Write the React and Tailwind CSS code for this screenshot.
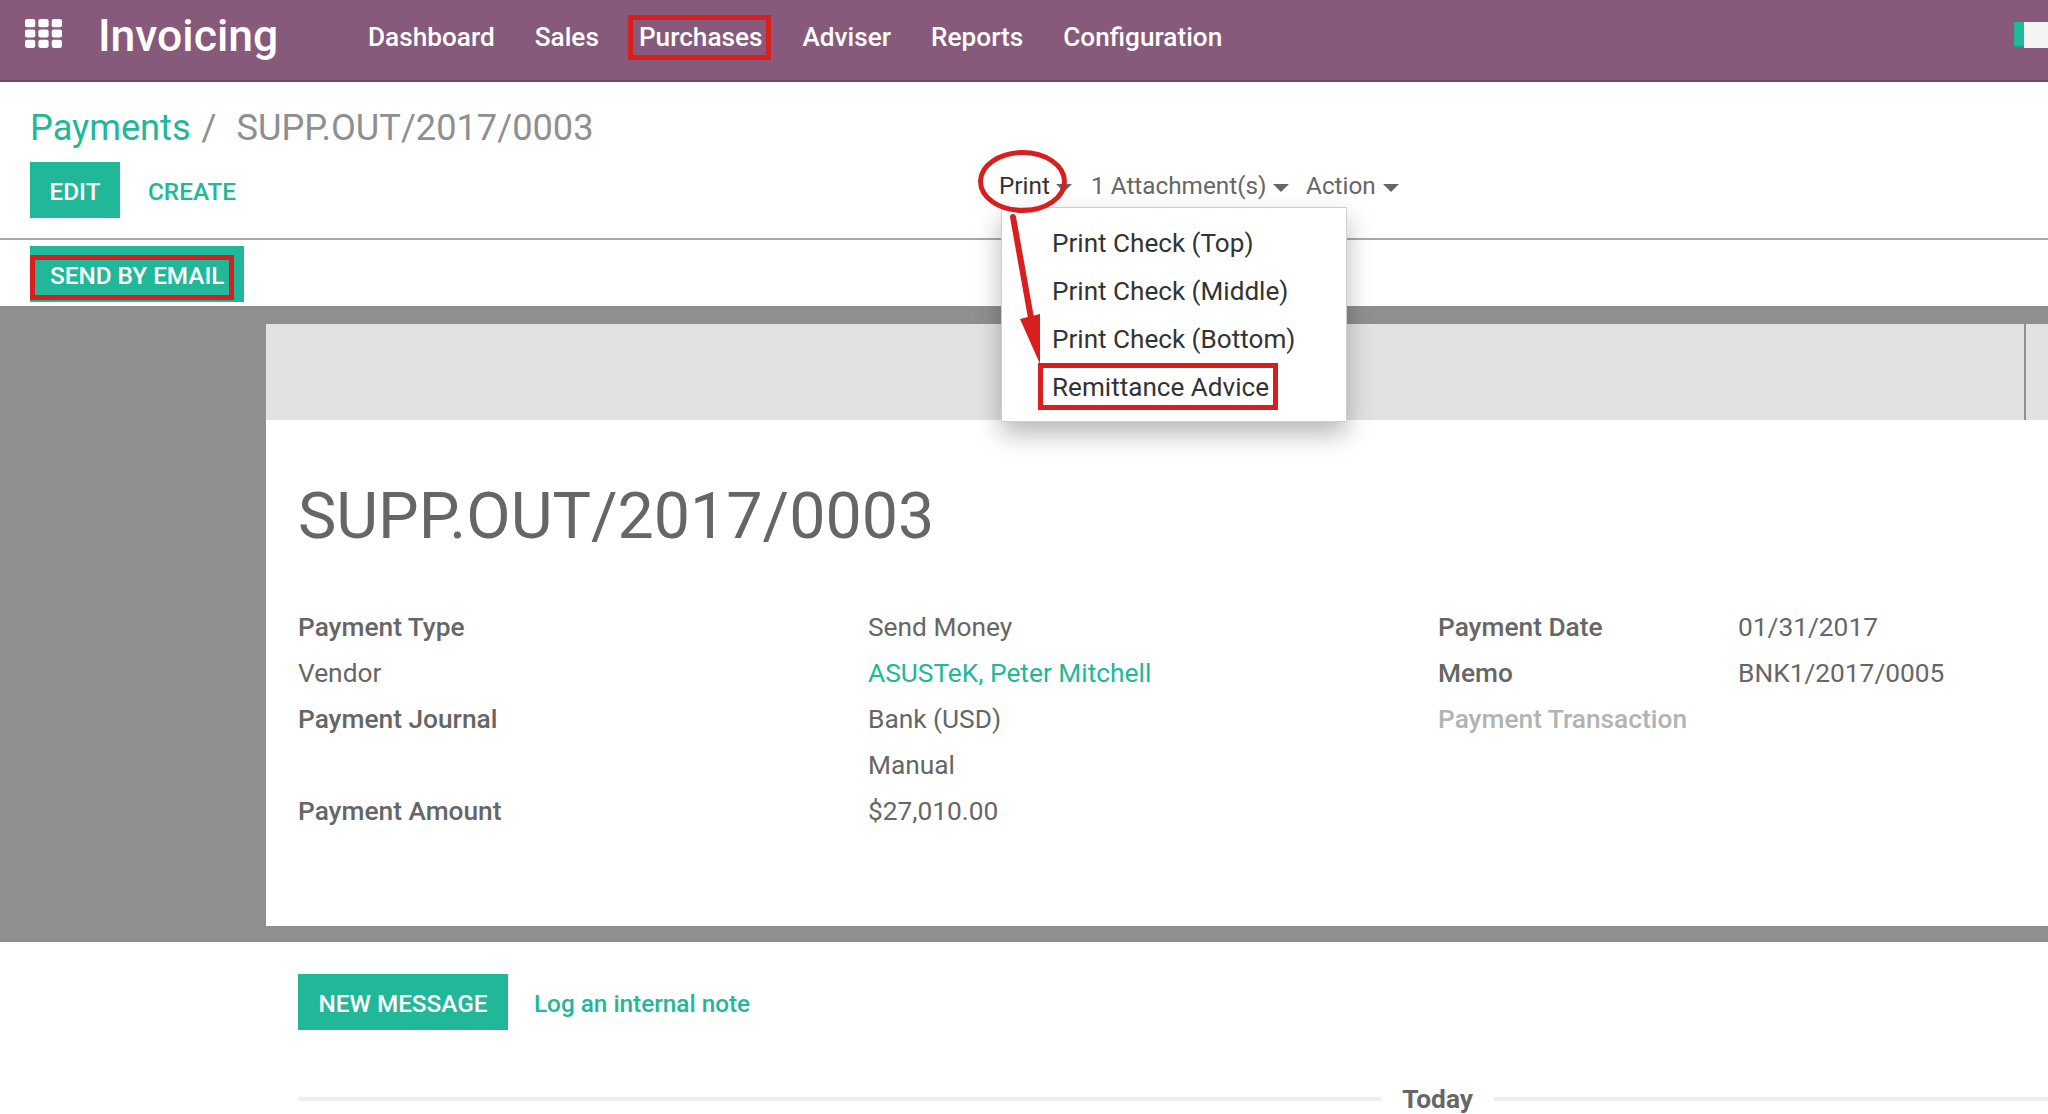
import React from 'react';

const font = { fontFamily: 'Roboto, "Liberation Sans", sans-serif' };
const navItems = ['Dashboard', 'Sales', 'Purchases', 'Adviser', 'Reports', 'Configuration'];
const menuItems = ['Print Check (Top)', 'Print Check (Middle)', 'Print Check (Bottom)', 'Remittance Advice'];

function Caret({ className }) {
  return <span className={`inline-block border-x-[8px] border-t-[8px] border-x-transparent border-t-[#666] ${className}`} />;
}

function AppsIcon() {
  return (
    <svg className="mb-[8px]" width="37" height="29" viewBox="0 0 36 28" fill="#fff">
      {[0, 13, 26].map((x) =>
        [0, 10, 20].map((y) => <rect key={`${x}-${y}`} x={x} y={y} width="10" height="8" rx="2" />)
      )}
    </svg>
  );
}

function Field({ label, value, bold, muted, link }) {
  return (
    <>
      <div className={`${bold ? 'font-medium' : ''} ${muted ? 'font-medium text-[#b3b3b3]' : ''}`}>{label}</div>
      <div className={link ? 'text-[#21b799]' : ''}>{value}</div>
    </>
  );
}

export default function App() {
  return (
    <div className="relative h-[1114px] overflow-hidden bg-white text-[26.3px] leading-[46px] text-[#666]" style={font}>
      <nav className="flex h-[82px] items-center border-b-2 border-[#6c4a64] bg-[#875a7b] pb-[6px] pl-[25px] text-white">
        <AppsIcon />
        <span className="mb-[2px] ml-[36px] w-[270px] text-[44.5px] font-medium leading-none">Invoicing</span>
        <ul className="flex gap-[40px] text-[26.2px] font-medium">
          {navItems.map((item) => (
            <li key={item}>{item}</li>
          ))}
        </ul>
        <div className="mb-[4px] ml-auto flex h-[26px] w-[34px]">
          <div className="w-[10px] border-b-2 border-[#1a9a80] bg-[#21b799]" />
          <div className="flex-1 bg-[#f4f4f4]" />
        </div>
      </nav>

      <div className="px-[30px]">
        <div className="flex h-[70px] items-center pt-[22px] text-[36.2px] leading-none">
          <span className="text-[#21b799]">Payments</span>
          <span className="ml-[11px] text-[#8f8f8f]">/</span>
          <span className="ml-[20px] text-[#8f8f8f]">SUPP.OUT/2017/0003</span>
        </div>
        <div className="relative flex h-[86px] items-start pt-[10px] text-[24.3px]">
          <button className="h-[56px] w-[90px] bg-[#21b799] pt-[3px] font-medium text-white">EDIT</button>
          <button className="ml-[28px] h-[56px] pt-[3px] font-medium text-[#21b799]">CREATE</button>
          <div className="ml-[763px] flex h-[48px] items-center">
            <span className="flex w-[92px] items-center text-[#333]">Print<Caret className="ml-[6px] translate-y-[2px]" /></span>
            <span className="flex w-[215px] items-center">1 Attachment(s)<Caret className="ml-[7px] translate-y-[2px]" /></span>
            <span className="flex items-center">Action<Caret className="ml-[7px] translate-y-[2px]" /></span>
          </div>
        </div>
      </div>

      <div className="h-[68px] border-t-2 border-[#a8a8a8] pl-[30px] pt-[6px]">
        <button className="h-[56px] w-[214px] bg-[#21b799] pl-[20px] pt-[3px] text-left text-[24.3px] font-medium text-white">SEND BY EMAIL</button>
      </div>

      <div className="bg-[#8f8f8f] pb-[16px] pl-[266px] pt-[18px]">
        <div className="relative flex h-[96px] bg-[#e2e2e0]">
          <div className="ml-auto mr-[22px] w-[2px] bg-[#8f8f8f]" />
        </div>
        <div className="h-[506px] bg-white pl-[32px] pt-[51px]">
          <h1 className="text-[64.5px] leading-[90px]">SUPP.OUT/2017/0003</h1>
          <div className="mt-[43px] grid grid-cols-[570px_570px_300px_1fr]">
            <Field label="Payment Type" value="Send Money" bold />
            <Field label="Payment Date" value="01/31/2017" bold />
            <Field label="Vendor" value="ASUSTeK, Peter Mitchell" link />
            <Field label="Memo" value="BNK1/2017/0005" bold />
            <Field label="Payment Journal" value="Bank (USD)" bold />
            <Field label="Payment Transaction" value="" muted />
            <Field label="" value="Manual" />
            <div className="col-span-2" />
            <Field label="Payment Amount" value="$27,010.00" bold />
          </div>
        </div>
      </div>

      <div className="pl-[298px] pt-[32px]">
        <div className="flex items-center text-[24.3px]">
          <button className="h-[56px] w-[210px] bg-[#21b799] pt-[3px] font-medium text-white">NEW MESSAGE</button>
          <span className="ml-[26px] pt-[3px] font-medium text-[#21b799]">Log an internal note</span>
        </div>
        <div className="mt-[46px] flex items-center font-bold">
          <div className="h-[4px] flex-1 bg-[#eeeeee]" />
          <span className="mx-[21px]">Today</span>
          <div className="h-[4px] w-[554px] bg-[#eeeeee]" />
        </div>
      </div>

      {/* print dropdown */}
      <ul className="absolute left-[1001px] top-[207px] h-[215px] w-[346px] border border-[#cfcfcf] bg-white pl-[50px] pt-[11px] text-[26.1px] text-[#333] shadow-[0_12px_24px_rgba(0,0,0,0.28)]">
        {menuItems.map((item) => (
          <li key={item} className="h-[48px] leading-[48px]">{item}</li>
        ))}
      </ul>

      {/* red annotations */}
      <div className="absolute left-[628px] top-[15px] h-[45px] w-[143px] border-[5px] border-[#d71f1f]" />
      <div className="absolute left-[30px] top-[255px] h-[45px] w-[204px] border-[5px] border-[#d71f1f]" />
      <div className="absolute left-[1038px] top-[363px] h-[47px] w-[240px] border-[5px] border-[#d71f1f]" />
      <svg className="absolute left-[970px] top-[145px]" width="100" height="225" viewBox="970 145 100 225" fill="none">
        <ellipse cx="1022.5" cy="181.5" rx="42" ry="29" stroke="#d71f1f" strokeWidth="5" />
        <path d="M1013 217 L1031 318" stroke="#d71f1f" strokeWidth="6" strokeLinecap="round" />
        <path d="M1020 319 L1040 314 L1040 364 Z" fill="#d71f1f" />
      </svg>
    </div>
  );
}
